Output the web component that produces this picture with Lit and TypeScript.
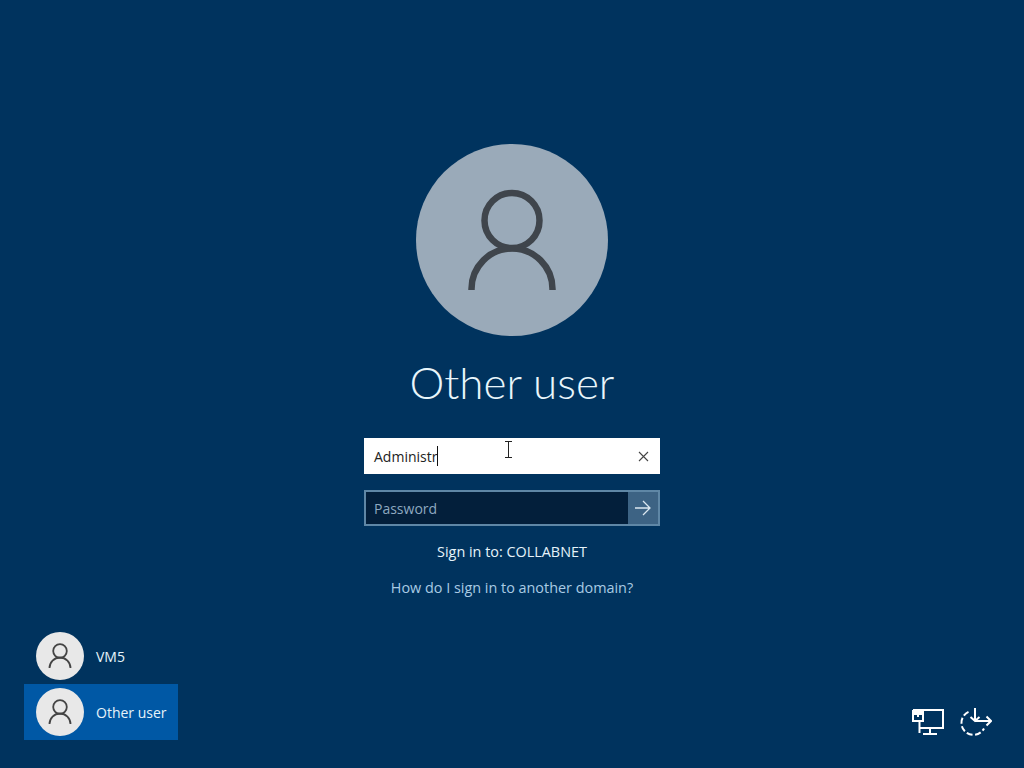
import { LitElement, html, css, svg } from "lit";
import { customElement } from "lit/decorators.js";

const person = svg`<circle cx="24" cy="19" r="6.800" fill="none" stroke="currentColor" stroke-width="1.800"/><path d="M13.500 36A10.500 10.500 0 0 1 34.500 36" fill="none" stroke="currentColor" stroke-width="1.800"/>`;

@customElement("app-root")
export class AppRoot extends LitElement {
  static styles = css`
    :host {
      display: grid;
      grid-template-rows: 1fr auto;
      width: 1024px;
      height: 768px;
      overflow: hidden;
      background: #00335e;
      color: #fff;
      font-family: "Open Sans", "Noto Sans", sans-serif;
      font-size: 14px;
    }
    .main {
      display: flex;
      flex-direction: column;
      align-items: center;
      padding-top: 144px;
    }
    .avatar {
      width: 192px;
      height: 192px;
      border-radius: 50%;
      background: #9aaab9;
      color: #3f454c;
    }
    .avatar svg {
      width: 192px;
      height: 192px;
      display: block;
    }
    h1 {
      margin: 17px 0 0;
      height: 68px;
      line-height: 58px;
      font-family: Lato, "Open Sans", sans-serif;
      font-size: 44px;
      font-weight: 300;
      color: #e9f6fb;
    }
    .field {
      width: 296px;
      height: 36px;
      box-sizing: border-box;
      display: flex;
      align-items: center;
      position: relative;
    }
    .user {
      margin-top: 17px;
      background: #fff;
      color: #222;
      padding: 0 10px;
      justify-content: space-between;
    }
    .typed {
      display: flex;
      align-items: center;
    }
    .caret {
      width: 1px;
      height: 20px;
      background: #111;
    }
    .clear {
      width: 11px;
      height: 11px;
      display: block;
      margin-right: 1px;
      color: #444;
    }
    .cursor {
      position: absolute;
      left: 140px;
      top: 3px;
      width: 9px;
      height: 17px;
      color: #222;
    }
    .pass {
      margin-top: 16px;
      border: 2px solid #5f87a6;
      background: #031f3b;
      color: #8ea9c0;
      padding-left: 8px;
      justify-content: space-between;
    }
    .go {
      width: 30px;
      height: 32px;
      background: #3d6384;
      display: flex;
      align-items: center;
      justify-content: center;
      color: #dbe7f0;
    }
    .go svg {
      width: 16px;
      height: 16px;
      display: block;
    }
    .signin {
      margin-top: 16px;
      line-height: 20px;
      font-size: 14.400px;
      color: #e6f3fa;
    }
    .how {
      margin-top: 16px;
      line-height: 20px;
      font-size: 14.400px;
      color: #a9cbe4;
    }
    .foot {
      display: flex;
      justify-content: space-between;
      align-items: flex-end;
      padding: 0 32px 28px 24px;
    }
    .list {
      width: 154px;
    }
    .item {
      height: 56px;
      box-sizing: border-box;
      padding-left: 12px;
      display: flex;
      align-items: center;
      gap: 12px;
      color: #e6f3fa;
    }
    .item.on {
      background: #0058a5;
    }
    .mini {
      width: 48px;
      height: 48px;
      border-radius: 50%;
      background: #e8e8e8;
      color: #444;
    }
    .mini svg {
      width: 48px;
      height: 48px;
      display: block;
    }
    .icons {
      display: flex;
      gap: 16px;
      padding-bottom: 4px;
    }
    .icons svg {
      width: 32px;
      height: 28px;
      display: block;
    }
  `;

  private userRow(name: string, on: boolean) {
    return html`<div class="item ${on ? "on" : ""}">
      <div class="mini"><svg viewBox="0 0 48 48">${person}</svg></div>
      <span>${name}</span>
    </div>`;
  }

  render() {
    return html`
      <div class="main">
        <div class="avatar">
          <svg viewBox="0 0 192 192" fill="none" stroke="currentColor" stroke-width="6.500">
            <circle cx="96" cy="76.500" r="27.500"/>
            <path d="M55.500 146v-1A40.500 40.500 0 0 1 136.500 145v1"/>
          </svg>
        </div>
        <h1>Other user</h1>
        <div class="field user">
          <div class="typed"><span>Administr</span><i class="caret"></i></div>
          <svg class="clear" viewBox="0 0 11 11" fill="none" stroke="currentColor" stroke-width="1.100"><path d="M1 1l9 9M10 1l-9 9"/></svg>
          <svg class="cursor" viewBox="0 0 9 17" fill="none" stroke="currentColor" stroke-width="1"><path d="M1 .5h7M4.500 .5v16M1 16.500h7"/></svg>
        </div>
        <div class="field pass">
          <span>Password</span>
          <div class="go">
            <svg viewBox="0 0 16 16" fill="none" stroke="currentColor" stroke-width="1.300"><path d="M0 8h15M8 1l7 7-7 7"/></svg>
          </div>
        </div>
        <div class="signin">Sign in to: COLLABNET</div>
        <div class="how">How do I sign in to another domain?</div>
      </div>
      <div class="foot">
        <div class="list">
          ${this.userRow("VM5", false)}
          ${this.userRow("Other user", true)}
        </div>
        <div class="icons">
          <svg viewBox="0 0 32 28" fill="none" stroke="#fff" stroke-width="2">
            <path d="M1 2h30v18H7.500M7.500 13v12M18 20v6M11 26h14"/>
            <path d="M1 3v10h10V3z" fill="#00335e"/>
            <path d="M1 3h10v4H1z" fill="#fff" stroke="none"/>
            <path d="M5 7h2v2H5z" fill="#fff" stroke="none"/>
          </svg>
          <svg viewBox="0 0 32 28" fill="none" stroke="#fff" stroke-width="2">
            <path d="M8.500 3.900A12 12 0 1 0 24 20.500" stroke-dasharray="6 2.500"/>
            <path d="M15 0v13M10.500 9l4.500 4 4.500-4"/>
            <path d="M15 13h16M26.500 8.500l4.500 4.500-4.500 4.500"/>
          </svg>
        </div>
      </div>
    `;
  }
}
